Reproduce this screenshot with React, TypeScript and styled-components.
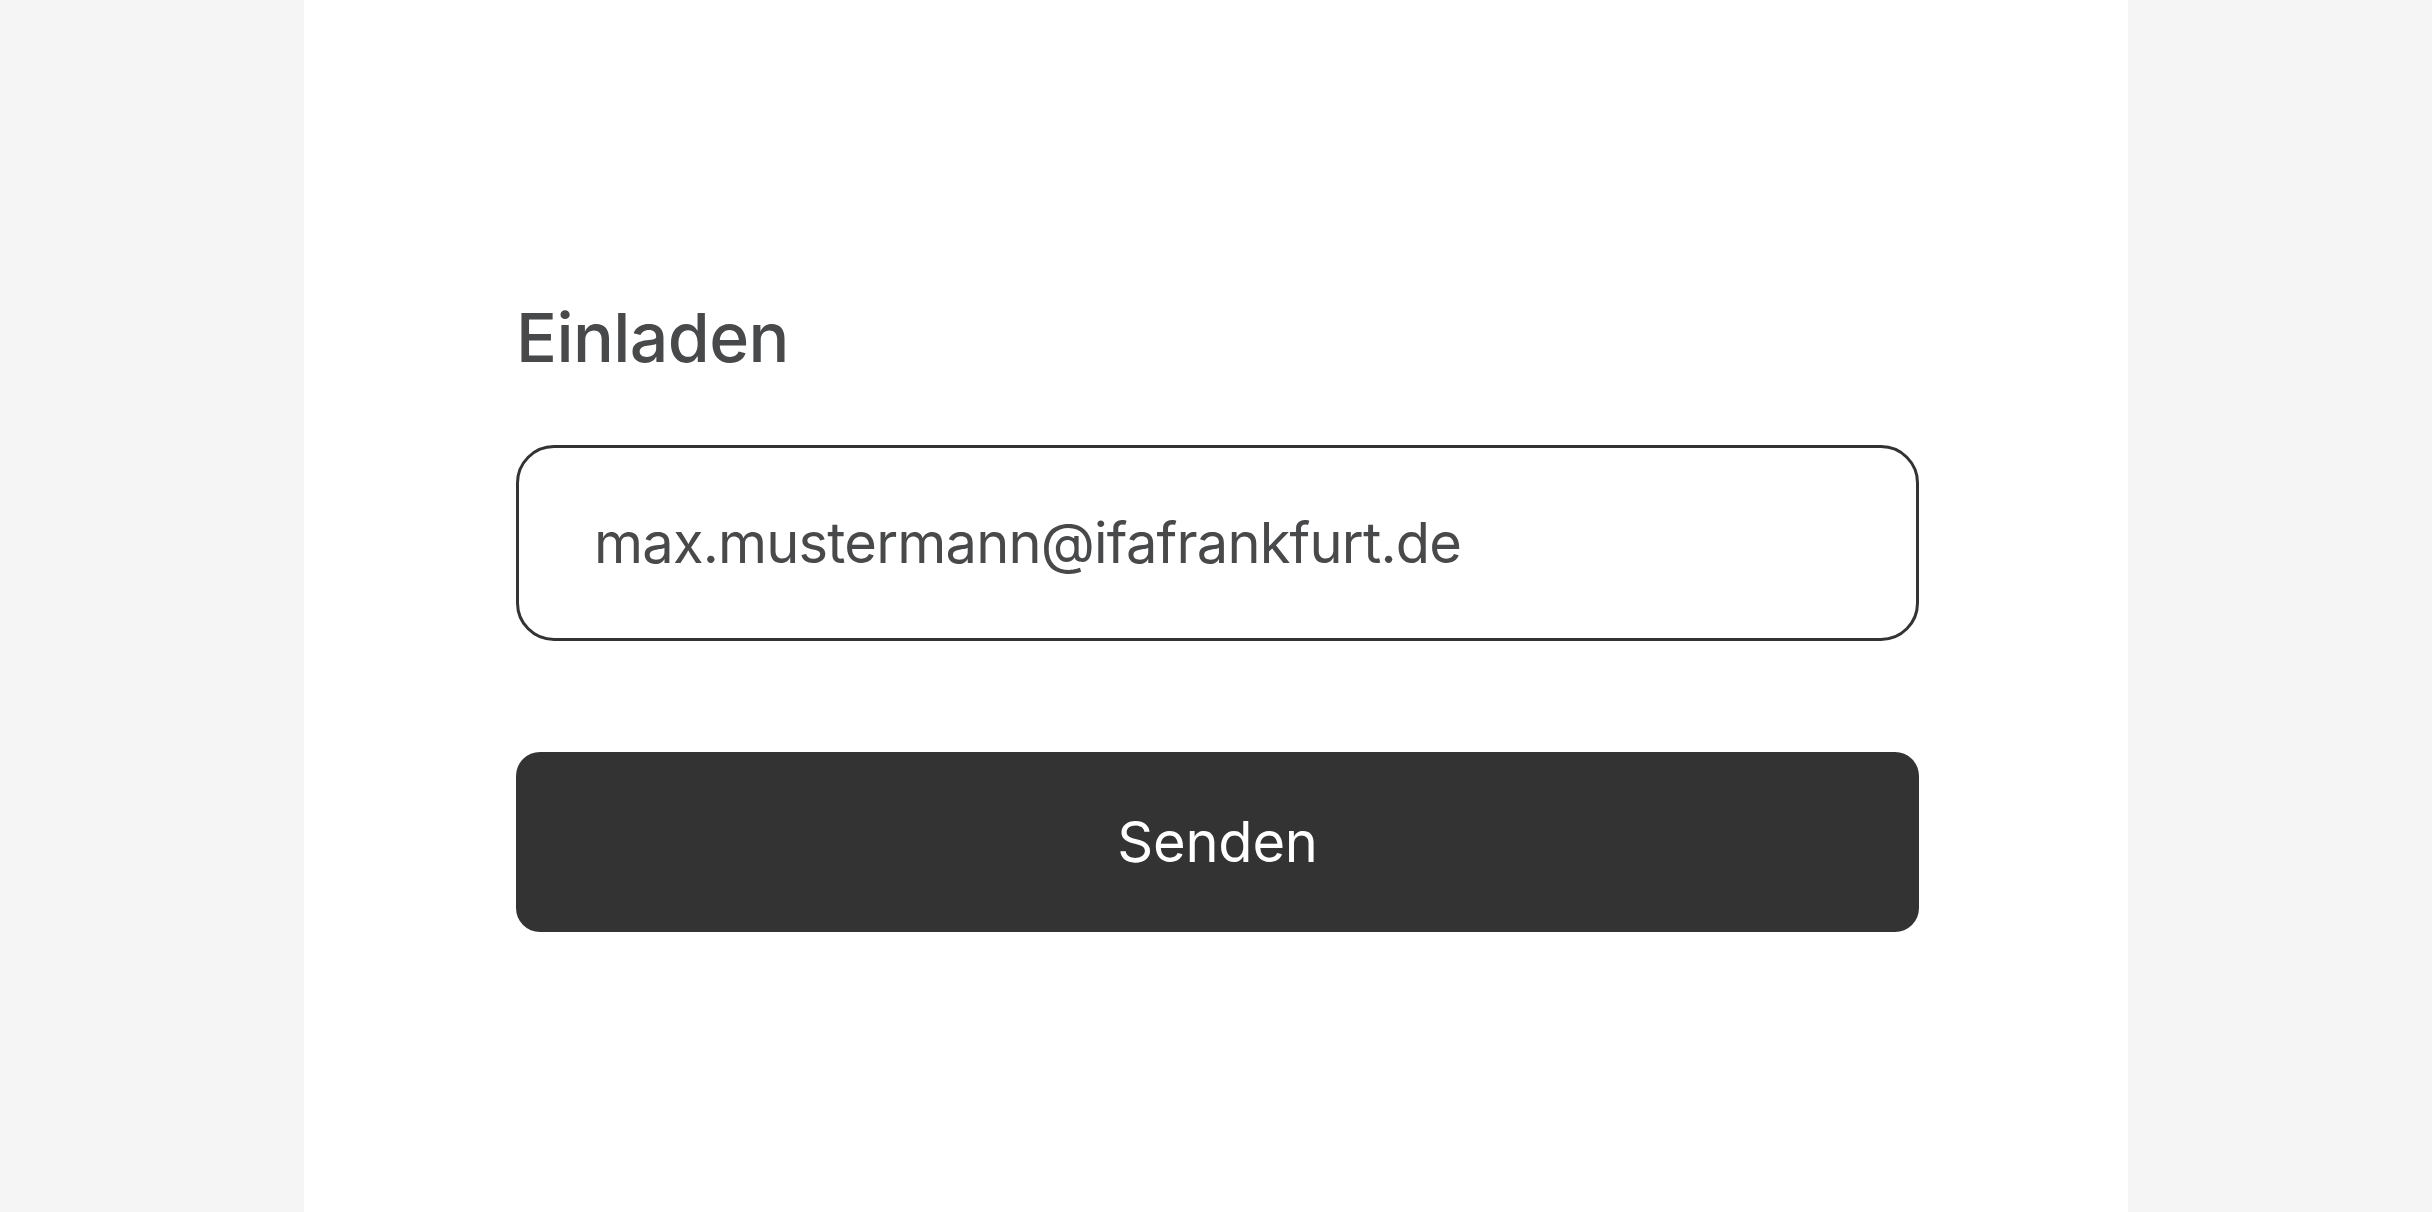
import styled, { createGlobalStyle } from "styled-components";

const GlobalStyle = createGlobalStyle`
  html, body {
    margin: 0;
    padding: 0;
    background-color: #f5f5f5;
    font-family: Inter, "Noto Sans", "Liberation Sans", sans-serif;
  }
  * {
    box-sizing: border-box;
  }
`;

const Page = styled.div`
  min-height: 100vh;
  display: flex;
  justify-content: center;
`;

const Panel = styled.main`
  width: 1824px;
  min-height: 100vh;
  background-color: #ffffff;
  padding: 296px 209px 0 212px;
  display: flex;
  flex-direction: column;
`;

const Title = styled.h1`
  margin: 0;
  font-size: 68px;
  line-height: 82px;
  font-weight: 500;
  color: #48494b;
  letter-spacing: -0.6px;
`;

const Form = styled.form`
  display: flex;
  flex-direction: column;
  margin-top: 67px;
`;

const EmailInput = styled.input`
  height: 196px;
  width: 100%;
  border: 3px solid #333333;
  border-radius: 38px;
  padding: 0 75px;
  font-family: inherit;
  font-size: 56px;
  letter-spacing: -0.8px;
  color: #48494b;
  background: #ffffff;
  outline: none;
`;

const SendButton = styled.button`
  margin-top: 111px;
  height: 180px;
  width: 100%;
  border: none;
  border-radius: 24px;
  background-color: #333333;
  color: #ffffff;
  font-family: inherit;
  font-size: 56px;
  font-weight: 400;
  letter-spacing: -0.2px;
  cursor: pointer;
`;

function App() {
  return (
    <>
      <GlobalStyle />
      <Page>
        <Panel>
          <Title>Einladen</Title>
          <Form onSubmit={(e) => e.preventDefault()}>
            <EmailInput
              type="email"
              defaultValue="max.mustermann@ifafrankfurt.de"
            />
            <SendButton type="submit">Senden</SendButton>
          </Form>
        </Panel>
      </Page>
    </>
  );
}

export default App;
